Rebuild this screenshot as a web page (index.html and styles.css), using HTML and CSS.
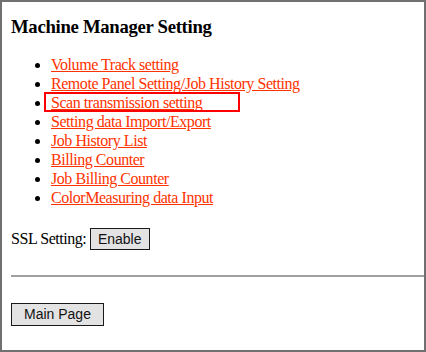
FILE: index.html
```
<!DOCTYPE html>
<html lang="en">
<head>
  <meta charset="UTF-8" />
  <title>Machine Manager Setting</title>
  <link rel="stylesheet" href="styles.css">
</head>
<body>
  <div class="frame">
    <h3>Machine Manager Setting</h3>
    <ul class="menu">
      <li><a href="#">Volume Track setting</a></li>
      <li><a href="#">Remote Panel Setting/Job History Setting</a></li>
      <li class="marked"><a href="#">Scan transmission setting</a><span class="mark"></span></li>
      <li><a href="#">Setting data Import/Export</a></li>
      <li><a href="#">Job History List</a></li>
      <li><a href="#">Billing Counter</a></li>
      <li><a href="#">Job Billing Counter</a></li>
      <li><a href="#">ColorMeasuring data Input</a></li>
    </ul>

    <form class="ssl">
      SSL Setting: <button type="button">Enable</button>
    </form>

    <hr />

    <form class="back">
      <button type="button" class="wide">Main Page</button>
    </form>
  </div>
</body>
</html>
```

FILE: styles.css
```
html, body {
  margin: 0;
  padding: 0;
}

body {
  font-family: 'Liberation Serif', 'Times New Roman', serif;
  font-size: 16px;
  letter-spacing: -0.45px;
  background: white;
  color: black;
}

.frame {
  box-sizing: border-box;
  width: 426px;
  height: 352px;
  border: 2px solid #707070;
  padding: 0 0 0 9px;
  overflow: hidden;
}

h3 {
  font-size: 18.72px;
  letter-spacing: -0.3px;
  margin: 14px 0 17px;
}

.menu {
  margin: 0;
  padding-left: 40px;
  line-height: 19px;
}

.menu a {
  color: #ff3300;
}

.marked {
  position: relative;
}

.mark {
  position: absolute;
  left: -7px;
  top: -1px;
  width: 192px;
  height: 16px;
  border: 2px solid #ff0000;
}

.ssl {
  margin: 21px 0 0;
}

button {
  font-family: 'Liberation Sans', Arial, sans-serif;
  font-size: 14px;
  letter-spacing: 0;
  line-height: 17px;
  background: #e3e3e3;
  border: 1px solid #1a1a1a;
  padding: 2px 7px 1px;
  margin: 0;
  color: #111;
  vertical-align: baseline;
}

button.wide {
  padding: 2px 12px;
}

hr {
  margin: 25px 0 0;
  border: none;
  border-top: 2px solid #a0a0a0;
}

.back {
  margin: 26px 0 0;
}
```
